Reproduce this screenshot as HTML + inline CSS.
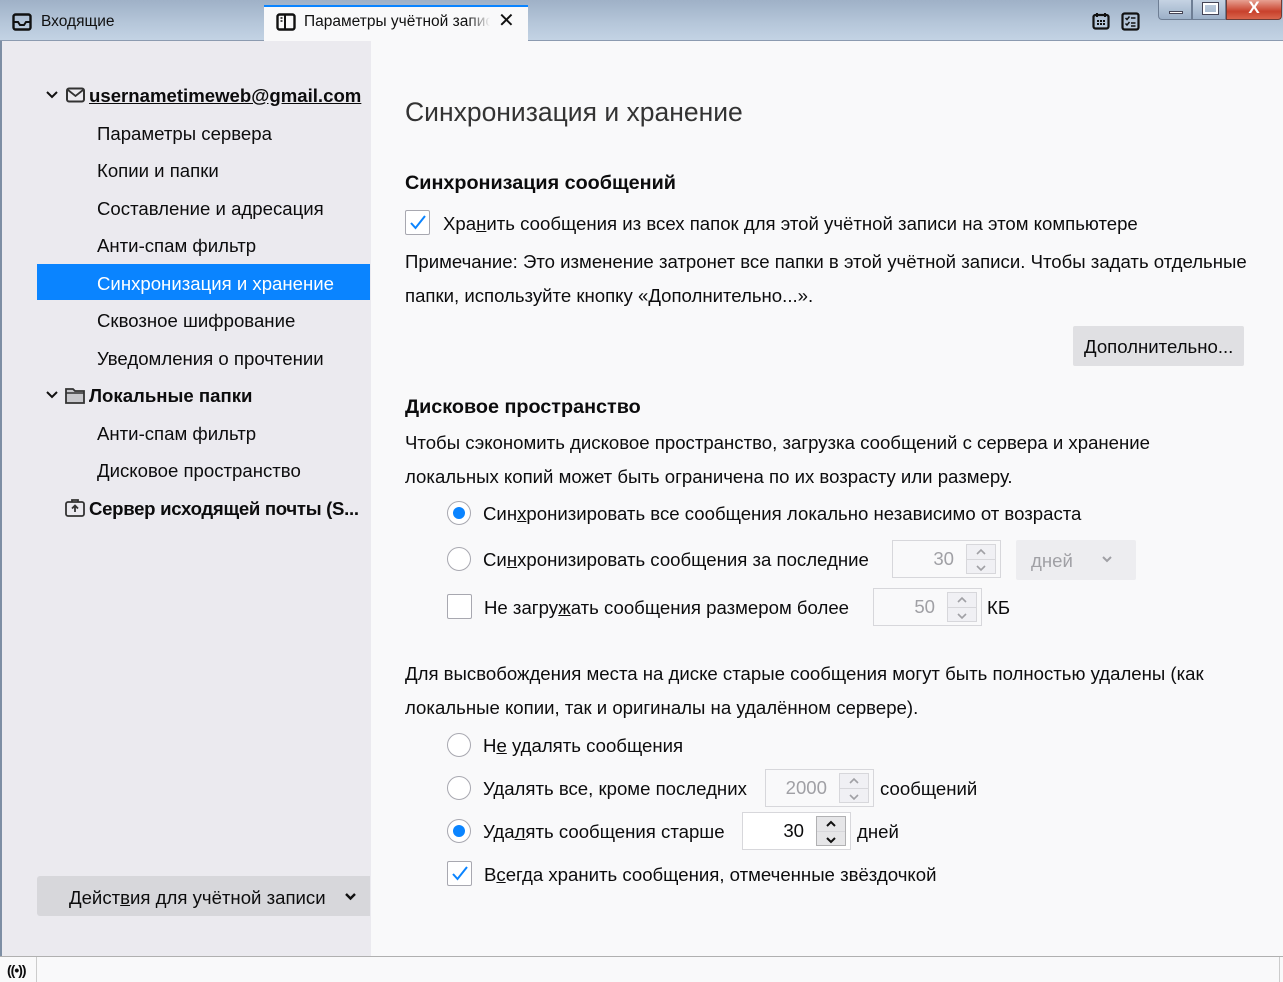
<!DOCTYPE html>
<html><head><meta charset="utf-8"><style>
*{margin:0;padding:0;box-sizing:border-box}
body{width:1283px;height:982px;overflow:hidden;position:relative;background:#f9f9fa;font-family:"Liberation Sans","Noto Sans CJK SC",sans-serif;color:#0c0c0d;font-size:18.6px}
.a{position:absolute;white-space:nowrap;line-height:22px}
#title{position:absolute;left:0;top:0;width:1283px;height:41px;background:linear-gradient(#9fb1c7,#b6c7da 60%,#c3d3e4);border-bottom:1px solid #8c9bb0}
#side{position:absolute;left:2px;top:41px;width:369px;height:915px;background:#ebeaef}
#status{position:absolute;left:0;top:956px;width:1283px;height:26px;background:#f9f9fa;border-top:1px solid #b0b0b0}
.sel{position:absolute;left:37px;top:264px;width:333px;height:36px;background:#0a84ff}
.rad{position:absolute;width:24px;height:24px;border:1px solid #a8a8b0;border-radius:50%;background:#fff}
.rad.on::after{content:"";position:absolute;left:5px;top:5px;width:12px;height:12px;border-radius:50%;background:#0a84ff}
.cb{position:absolute;width:25px;height:25px;border:1px solid #a8a8b0;border-radius:2px;background:#fff}
.num{position:absolute;height:38px;border:1px solid #d7d7db;background:#f9f9fa;color:#a0a0a5;text-align:right;line-height:36px}
.num span{position:absolute;right:46px}
.spin{position:absolute;right:4px;top:3px;width:30px;height:30px;border:1px solid #d7d7db;background:#f0f0f4}
.spin::after{content:"";position:absolute;left:0;right:0;top:14px;border-top:1px solid #d7d7db}
.spin svg{position:absolute;left:8px;top:2px}
u{text-decoration:underline}
.b{font-weight:bold;font-size:19.8px}
.sb{font-weight:bold;font-size:18.6px}
</style></head><body>
<div id="title">
 <div style="position:absolute;left:264px;top:5px;width:264px;height:36px;background:#f9f9fa;border-top:2px solid #0a84ff"></div>
 <svg style="position:absolute;left:12px;top:13px" width="20" height="18" viewBox="0 0 20 18"><rect x="1.5" y="1.5" width="17" height="15" rx="2" fill="none" stroke="#111" stroke-width="2.4"/><path d="M2 9h4l2 3h4l2-3h4" fill="none" stroke="#111" stroke-width="2"/></svg>
 <div class="a" style="left:41px;top:11px;font-size:15.5px;color:#111">Входящие</div>
 <svg style="position:absolute;left:276px;top:13px" width="20" height="18" viewBox="0 0 20 18"><rect x="1.5" y="1.5" width="17" height="15" rx="2" fill="none" stroke="#111" stroke-width="2.4"/><path d="M9 2v14" stroke="#111" stroke-width="2"/><path d="M4.5 5h2M4.5 8h2" stroke="#111" stroke-width="1.5"/></svg>
 <div class="a" style="left:304px;top:11px;font-size:15.5px;width:186px;overflow:hidden;color:#111;-webkit-mask-image:linear-gradient(90deg,#000 88%,transparent)">Параметры учётной записи</div>
 <div class="a" style="left:498px;top:10px;font-size:20px;color:#111">✕</div>
 <svg style="position:absolute;left:1092px;top:12px" width="18" height="18" viewBox="0 0 18 18"><rect x="1.5" y="3" width="15" height="13.5" rx="2" fill="none" stroke="#111" stroke-width="2.2"/><path d="M5 1v4M13 1v4" stroke="#111" stroke-width="2"/><path d="M5 9h2M8 9h2M11 9h2M5 12h2M8 12h2M11 12h2" stroke="#111" stroke-width="2"/></svg>
 <svg style="position:absolute;left:1121px;top:12px" width="19" height="19" viewBox="0 0 19 19"><rect x="1.5" y="1.5" width="16" height="16" rx="2" fill="none" stroke="#111" stroke-width="2.2"/><path d="M4.5 6l1.5 1.5 2.5-3M4.5 11.5l1.5 1.5 2.5-3M10 6h4.5M10 11h4.5M10 14h4.5" fill="none" stroke="#111" stroke-width="1.5"/></svg>
 <div style="position:absolute;left:1158px;top:0;width:34px;height:20px;border:1px solid #6e7e94;border-top:0;border-radius:0 0 0 4px;background:linear-gradient(#c5d3e3,#9cb0c8)"><div style="position:absolute;left:10px;top:11px;width:14px;height:3px;background:#fff;border:1px solid #445"></div></div>
 <div style="position:absolute;left:1192px;top:0;width:34px;height:20px;border:1px solid #6e7e94;border-top:0;background:linear-gradient(#c5d3e3,#9cb0c8)"><div style="position:absolute;left:10px;top:3px;width:15px;height:11px;border:2px solid #fff;outline:1px solid #445"></div></div>
 <div style="position:absolute;left:1226px;top:0;width:56px;height:20px;border:1px solid #6e3b35;border-top:0;border-radius:0 0 4px 0;background:linear-gradient(#e7a193,#c8412c 60%,#d9654c);color:#fff;font-weight:bold;text-align:center;font-size:17px;line-height:16px">X</div>
</div>
<div id="side"></div>
<div class="sel"></div>
<svg style="position:absolute;left:45px;top:89px" width="14" height="12" viewBox="0 0 14 12"><path d="M2 3l5 5 5-5" fill="none" stroke="#111" stroke-width="2"/></svg>
<svg style="position:absolute;left:66px;top:87px" width="19" height="16" viewBox="0 0 19 16"><rect x="1" y="1.5" width="17" height="13" rx="2" fill="none" stroke="#333" stroke-width="2"/><path d="M2 3l7.5 6L17 3" fill="none" stroke="#333" stroke-width="1.8"/></svg>
<div class="a sb" style="left:89px;top:85px;text-decoration:underline">usernametimeweb@gmail.com</div>
<div class="a" style="left:97px;top:123px">Параметры сервера</div>
<div class="a" style="left:97px;top:160px">Копии и папки</div>
<div class="a" style="left:97px;top:198px">Составление и адресация</div>
<div class="a" style="left:97px;top:235px">Анти-спам фильтр</div>
<div class="a" style="left:97px;top:273px;color:#fff">Синхронизация и хранение</div>
<div class="a" style="left:97px;top:310px">Сквозное шифрование</div>
<div class="a" style="left:97px;top:348px">Уведомления о прочтении</div>
<svg style="position:absolute;left:45px;top:389px" width="14" height="12" viewBox="0 0 14 12"><path d="M2 3l5 5 5-5" fill="none" stroke="#111" stroke-width="2"/></svg>
<svg style="position:absolute;left:65px;top:387px" width="20" height="17" viewBox="0 0 20 17"><path d="M1 2h7l2 2h9v12H1z" fill="#c8c8cc" stroke="#333" stroke-width="1.8"/><path d="M1 6h18" stroke="#333" stroke-width="1.5"/></svg>
<div class="a sb" style="left:89px;top:385px">Локальные папки</div>
<div class="a" style="left:97px;top:423px">Анти-спам фильтр</div>
<div class="a" style="left:97px;top:460px">Дисковое пространство</div>
<svg style="position:absolute;left:65px;top:499px" width="20" height="18" viewBox="0 0 20 18"><rect x="1" y="3" width="18" height="14" rx="2" fill="none" stroke="#333" stroke-width="1.8"/><path d="M7 3V1h6v2M10 13V7M7 9.5l3-3 3 3" fill="none" stroke="#333" stroke-width="1.8"/></svg>
<div class="a sb" style="left:89px;top:498px;letter-spacing:-0.3px">Сервер исходящей почты (S...</div>
<div style="position:absolute;left:37px;top:876px;width:333px;height:40px;background:#d7d7db;border-radius:3px 0 0 3px"></div>
<div class="a" style="left:69px;top:887px">Дейст<u>в</u>ия для учётной записи</div>
<svg style="position:absolute;left:344px;top:892px" width="13" height="10" viewBox="0 0 13 10"><path d="M2 2l4.5 4.5L11 2" fill="none" stroke="#111" stroke-width="2.4"/></svg>

<div class="a" style="left:405px;top:97px;font-size:26.5px;line-height:30px;color:#333;font-weight:300">Синхронизация и хранение</div>
<div class="a b" style="left:405px;top:172px">Синхронизация сообщений</div>
<div class="cb" style="left:405px;top:210px"></div>
<svg style="position:absolute;left:409px;top:214px" width="18" height="18" viewBox="0 0 18 18"><path d="M2 9l4.5 5L16 2" fill="none" stroke="#0a84ff" stroke-width="2"/></svg>
<div class="a" style="left:443px;top:213px">Хра<u>н</u>ить сообщения из всех папок для этой учётной записи на этом компьютере</div>
<div class="a" style="left:405px;top:251px">Примечание: Это изменение затронет все папки в этой учётной записи. Чтобы задать отдельные</div>
<div class="a" style="left:405px;top:285px">папки, используйте кнопку «Дополнительно...».</div>
<div style="position:absolute;left:1073px;top:326px;width:171px;height:40px;background:#e0e0e3;border-radius:2px"></div>
<div class="a" style="left:1084px;top:336px"><u>Д</u>ополнительно...</div>
<div class="a b" style="left:405px;top:396px">Дисковое пространство</div>
<div class="a" style="left:405px;top:432px">Чтобы сэкономить дисковое пространство, загрузка сообщений с сервера и хранение</div>
<div class="a" style="left:405px;top:466px">локальных копий может быть ограничена по их возрасту или размеру.</div>
<div class="rad on" style="left:447px;top:501px"></div>
<div class="a" style="left:483px;top:503px">Син<u>х</u>ронизировать все сообщения локально независимо от возраста</div>
<div class="rad" style="left:447px;top:547px"></div>
<div class="a" style="left:483px;top:549px">Си<u>н</u>хронизировать сообщения за последние</div>
<div class="num" style="left:892px;top:540px;width:109px"><span>30</span><div class="spin"><svg width="12" height="26" viewBox="0 0 12 26"><path d="M2 7l4-4 4 4M2 19l4 4 4-4" fill="none" stroke="#a0a0a5" stroke-width="1.6"/></svg></div></div>
<div style="position:absolute;left:1016px;top:540px;width:120px;height:40px;background:#ededf0;border-radius:2px"></div>
<div class="a" style="left:1031px;top:550px;color:#a0a0a5">дней</div>
<svg style="position:absolute;left:1101px;top:555px" width="12" height="9" viewBox="0 0 12 9"><path d="M2 2l4 4 4-4" fill="none" stroke="#a0a0a5" stroke-width="2"/></svg>
<div class="cb" style="left:447px;top:594px"></div>
<div class="a" style="left:484px;top:597px">Не загру<u>ж</u>ать сообщения размером более</div>
<div class="num" style="left:873px;top:588px;width:109px"><span>50</span><div class="spin"><svg width="12" height="26" viewBox="0 0 12 26"><path d="M2 7l4-4 4 4M2 19l4 4 4-4" fill="none" stroke="#a0a0a5" stroke-width="1.6"/></svg></div></div>
<div class="a" style="left:987px;top:597px">КБ</div>
<div class="a" style="left:405px;top:663px">Для высвобождения места на диске старые сообщения могут быть полностью удалены (как</div>
<div class="a" style="left:405px;top:697px">локальные копии, так и оригиналы на удалённом сервере).</div>
<div class="rad" style="left:447px;top:733px"></div>
<div class="a" style="left:483px;top:735px">Н<u>е</u> удалять сообщения</div>
<div class="rad" style="left:447px;top:776px"></div>
<div class="a" style="left:483px;top:778px">Удалять все, кроме последних</div>
<div class="num" style="left:765px;top:769px;width:109px"><span>2000</span><div class="spin"><svg width="12" height="26" viewBox="0 0 12 26"><path d="M2 7l4-4 4 4M2 19l4 4 4-4" fill="none" stroke="#a0a0a5" stroke-width="1.6"/></svg></div></div>
<div class="a" style="left:880px;top:778px">сообщений</div>
<div class="rad on" style="left:447px;top:819px"></div>
<div class="a" style="left:483px;top:821px">Уда<u>л</u>ять сообщения старше</div>
<div class="num" style="left:742px;top:812px;width:109px;background:#fff;color:#0c0c0d"><span>30</span><div class="spin" style="background:#e6e6e8;border-color:#b1b1b3"><svg width="12" height="26" viewBox="0 0 12 26"><path d="M2 7l4-4 4 4M2 19l4 4 4-4" fill="none" stroke="#111" stroke-width="2"/></svg></div></div>
<div class="a" style="left:857px;top:821px">дней</div>
<div class="cb" style="left:447px;top:861px"></div>
<svg style="position:absolute;left:451px;top:865px" width="18" height="18" viewBox="0 0 18 18"><path d="M2 9l4.5 5L16 2" fill="none" stroke="#0a84ff" stroke-width="2"/></svg>
<div class="a" style="left:484px;top:864px">В<u>с</u>егда хранить сообщения, отмеченные звёздочкой</div>

<div id="status"><div style="position:absolute;left:36px;top:0;bottom:0;border-left:1px solid #ccc"></div><div style="position:absolute;left:1279px;top:0;bottom:0;border-left:1px solid #ccc"></div>
<div class="a" style="left:7px;top:2px;font-size:14px;font-weight:bold;letter-spacing:-1px">((•))</div></div>
<div style="position:absolute;left:0;top:41px;width:2px;height:915px;background:#7d8ea4"></div>
</body></html>
